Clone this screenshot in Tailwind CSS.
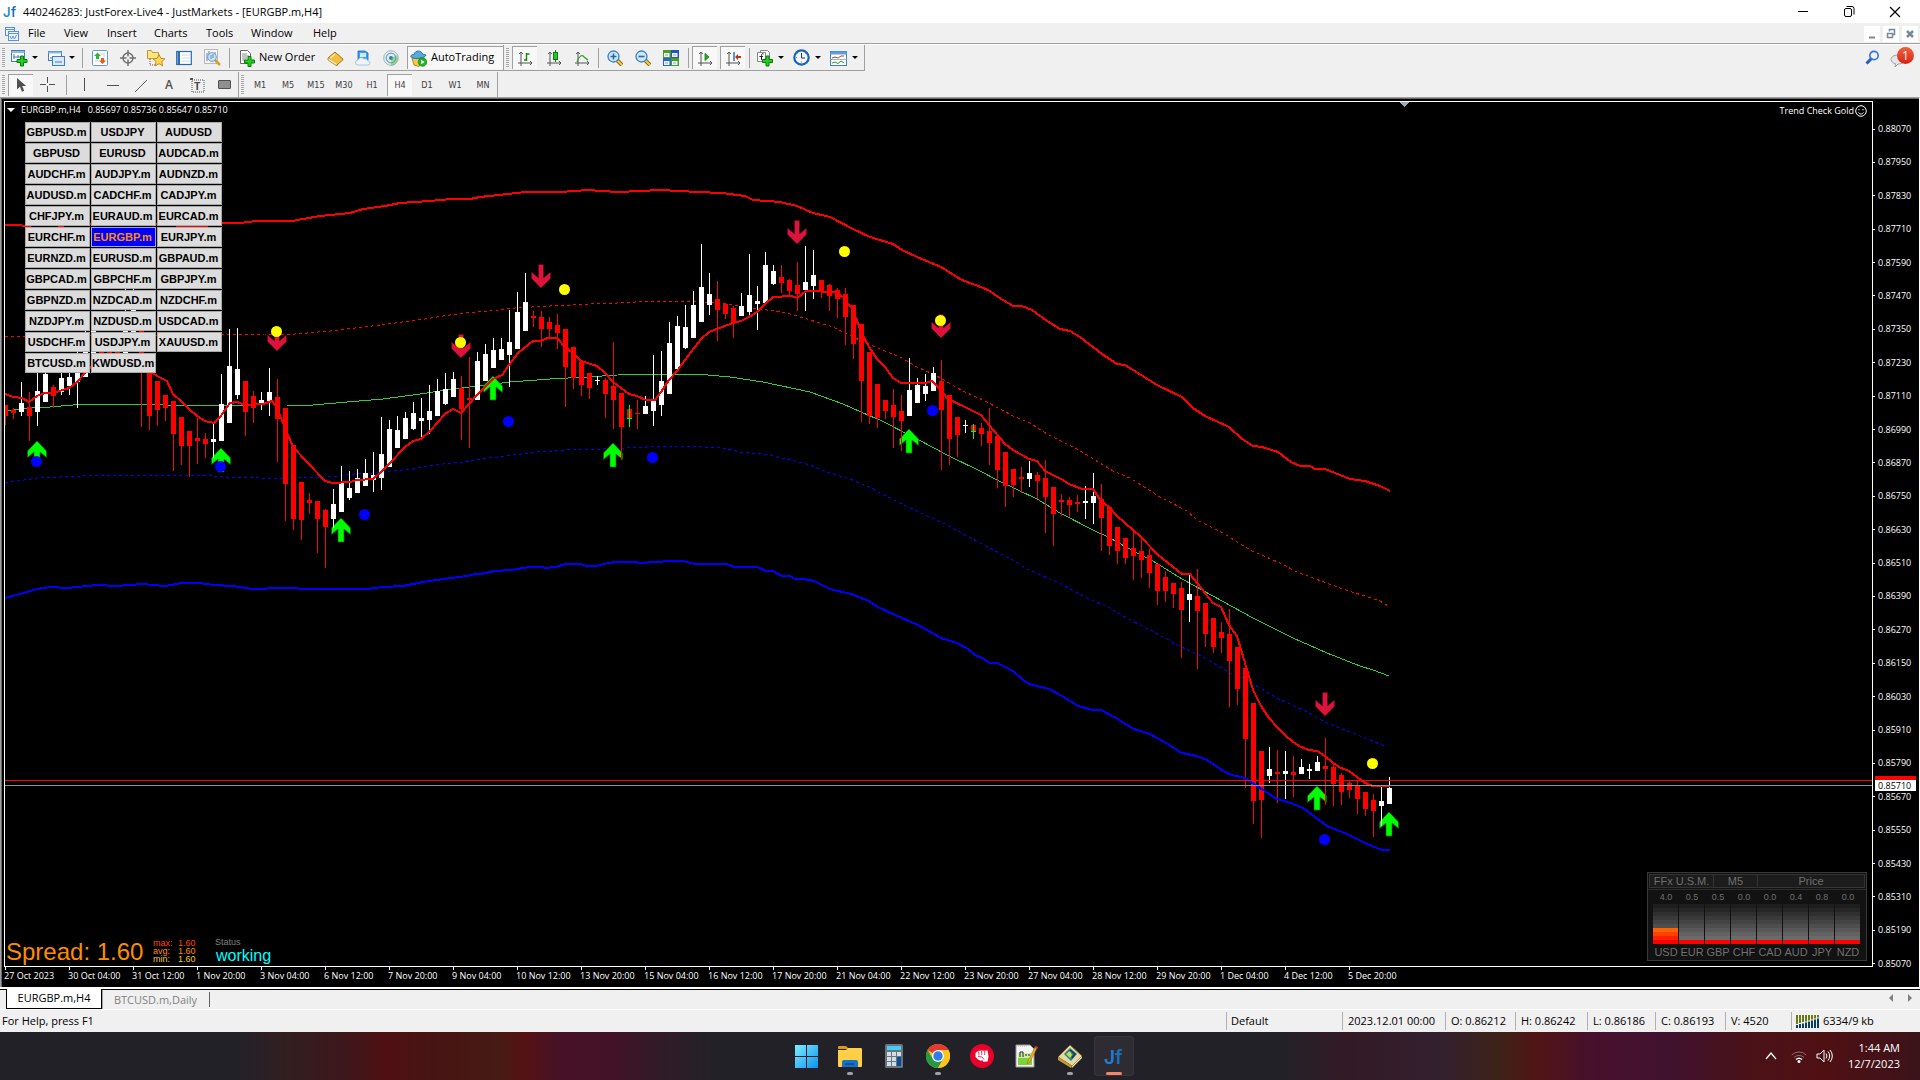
<!DOCTYPE html>
<html lang="en">
<head>
<meta charset="utf-8">
<title>440246283: JustForex-Live4 - JustMarkets - [EURGBP.m,H4]</title>
<script src="https://cdn.jsdelivr.net/npm/@tailwindcss/browser@4"></script>
</head>
<body class="flex h-screen flex-col overflow-hidden bg-[#f0f0f0] font-['Open_Sans','Noto_Sans',sans-serif] text-[11px] leading-4 text-black">

<svg class="hidden" aria-hidden="true">
  <defs>
    <g id="axes"><path d="M4 2v14M1 13h14M2 4l2-2 2 2M13 11l2 2-2 2" fill="none" stroke="#555"/></g>
    <g id="plus"><path d="M3.500 0h3v3.500h3.500v3h-3.500v3.500h-3v-3.500h-3.500v-3h3.500z" fill="#1fd01f" stroke="#087a08"/></g>
    <g id="lens"><path d="M10 10l5 5" stroke="#8a6a10" stroke-width="4"/><path d="M10 10l5 5" stroke="#f2c94a" stroke-width="2"/><circle cx="6.500" cy="6.500" r="5.500" fill="#cfe8fb" stroke="#3b7fc4" stroke-width="1.300"/></g>
    <g id="up"><path d="M0 0L9.500 10v6.500L3 11v13h-6v-13L-9.500 16.500v-6.500z" fill="#0f0" stroke="#060" stroke-width=".6"/></g>
    <g id="down"><path d="M0 0L9.500-9.500v-6.500L2.500-10v-13.500h-5v13.500L-9.500-16v6.500z" fill="#dc143c" stroke="#501" stroke-width=".4"/></g>
  </defs>
</svg>

<header class="flex h-[23px] shrink-0 items-center bg-white pl-[3px] pr-[2px]">
  <svg class="h-4 w-4 overflow-visible" viewBox="0 0 16 16"><text x="0" y="13" font-family="Inter" font-weight="600" font-size="13" fill="#1e88d0">J</text><text x="8" y="13" font-family="Inter" font-weight="600" font-size="13" fill="#1f6fb5">f</text></svg>
  <h1 class="ml-1 flex-1">440246283: JustForex-Live4 - JustMarkets - [EURGBP.m,H4]</h1>
  <button aria-label="Minimize" class="flex w-[46px] justify-center"><svg class="h-5 w-5" viewBox="0 0 20 20" fill="none" stroke="#000"><path d="M5 9.500h10"/></svg></button>
  <button aria-label="Restore" class="flex w-[46px] justify-center"><svg class="h-5 w-5" viewBox="0 0 20 20" fill="none" stroke="#000"><rect x="5.500" y="6.500" width="7" height="8" rx="1.500"/><path d="M7.500 4.500h5.500a2 2 0 0 1 2 2v6"/></svg></button>
  <button aria-label="Close" class="flex w-[46px] justify-center"><svg class="h-5 w-5" viewBox="0 0 20 20" fill="none" stroke="#000" stroke-width="1.200"><path d="M5 5l10 10M15 5L5 15"/></svg></button>
</header>

<nav class="flex h-[22px] shrink-0 items-center border-b border-white pl-[5px] shadow-[inset_0_-1px_0_#a0a0a0]">
  <svg class="mr-[9px] h-[14px] w-[14px]" viewBox="0 0 14 14" fill="#eef5ff" stroke="#5b8fe0"><rect x=".5" y=".5" width="9" height="8"/><path d="M.5 2.500h9"/><rect x="3.500" y="4.500" width="10" height="9"/><path d="M3.500 6.500h10M5 9l1.500 3 1.500-3 1.500 3 2-4" fill="none"/></svg>
  <button class="mb-[2px] w-9 text-left">File</button><button class="mb-[2px] w-[43px] text-left">View</button><button class="mb-[2px] w-[47px] text-left">Insert</button><button class="mb-[2px] w-[52px] text-left">Charts</button><button class="mb-[2px] w-[45px] text-left">Tools</button><button class="mb-[2px] w-[62px] text-left">Window</button><button class="mb-[2px] flex-1 text-left">Help</button>
  <div class="flex gap-[3px] pr-[2px]">
    <button aria-label="Minimize chart" class="h-4 w-4 bg-white"><svg class="h-4 w-4" viewBox="0 0 16 16"><path d="M5 11.500h6" stroke="#778899" stroke-width="2"/></svg></button>
    <button aria-label="Restore chart" class="h-4 w-4 bg-white"><svg class="h-4 w-4" viewBox="0 0 16 16" fill="none" stroke="#778899" stroke-width="1.500"><path d="M4.500 7.500h5v4h-5zM6.500 5.500v-2h5v5h-2"/></svg></button>
    <button aria-label="Close chart" class="h-4 w-4 bg-white"><svg class="h-4 w-4" viewBox="0 0 16 16"><path d="M5 5l6 6M11 5l-6 6" stroke="#778899" stroke-width="2.500"/></svg></button>
  </div>
</nav>

<div class="flex h-[27px] shrink-0 items-start">
  <div class="flex h-[26px] items-center border-b border-r border-[#a0a0a0]">
    <i class="ml-[2px] mr-[1px] h-5 w-[3px] bg-[repeating-linear-gradient(#a8a8a8_0_1px,#f0f0f0_1px_2px)]"></i>
    <button aria-label="New chart" class="flex w-[36px] items-center pl-[4px]"><svg class="h-[18px] w-[18px]" viewBox="0 0 18 18"><rect x="1.500" y="1.500" width="13" height="11" fill="#fff" stroke="#3d7fc0"/><path d="M1.500 3h13" stroke="#8ab8e8" stroke-width="2"/><path d="M4 5v5M8 6v3M3 8h7" stroke="#4a7dae"/><use href="#plus" x="7" y="7"/></svg><i class="ml-1 border-x-[3px] border-t-[3px] border-x-transparent border-t-black"></i></button>
    <button aria-label="Profiles" class="flex w-[37px] items-center pl-[5px]"><svg class="h-[18px] w-[18px]" viewBox="0 0 18 18"><rect x="1.500" y="2.500" width="13" height="9" fill="#fff" stroke="#3d7fc0"/><path d="M1.500 3.500h13" stroke="#8ab8e8" stroke-width="2"/><rect x="5.500" y="7.500" width="12" height="9" fill="#d8ebfc" stroke="#3d7fc0"/><path d="M4 8v2M8 13h7" stroke="#4a7dae"/></svg><i class="ml-1 border-x-[3px] border-t-[3px] border-x-transparent border-t-black"></i></button>
    <i class="mx-[3px] h-5 w-px bg-[#a0a0a0]"></i>
    <button aria-label="Market Watch" class="flex w-7 justify-center"><svg class="h-4 w-4" viewBox="0 0 16 16"><rect x=".5" y=".5" width="15" height="15" rx="1" fill="#fff" stroke="#5c9bd8"/><path d="M9 4h4M3 11h3M11 6h2" stroke="#bcd"/><path d="M5.500 2.500L9 6H7v3H4V6H2z" fill="#2db52d"/><path d="M10.500 14L7 10.500h2V8h3v2.500h2z" fill="#f0551c"/></svg></button>
    <button aria-label="Data Window" class="flex w-7 justify-center"><svg class="h-4 w-4" viewBox="0 0 16 16" fill="none" stroke="#707070" stroke-width="1.500"><circle cx="8" cy="8" r="5"/><path d="M8 0v6.500M8 9.500v6.500M0 8h6.500M9.500 8h6.500"/></svg></button>
    <button aria-label="Navigator" class="flex w-7 justify-center"><svg class="h-[18px] w-[18px]" viewBox="0 0 18 18"><path d="M.5 9.500v-8h4l1 2h6v6z" fill="#ffe680" stroke="#c9962c"/><path d="M3 10v6h5" stroke="#555" stroke-dasharray="1 1" fill="none"/><path d="M12 5.500l1.800 3.800 4 .5-3 2.800.8 4.200-3.600-2.100-3.700 2.100.8-4.200-3-2.800 4.100-.5z" fill="#ffd850" stroke="#c08a20"/></svg></button>
    <button aria-label="Terminal" class="flex w-7 justify-center"><svg class="h-4 w-4" viewBox="0 0 16 16"><rect x=".7" y="1.500" width="14.600" height="13" fill="#fff" stroke="#2a68b0" stroke-width="1.200"/><rect x="1.500" y="2" width="2.500" height="12" fill="#2a6cb8"/><path d="M6 5h8M6 8h8M6 11h8" stroke="#cbdcf2"/></svg></button>
    <button aria-label="Strategy Tester" class="flex w-7 justify-center"><svg class="h-[17px] w-[17px]" viewBox="0 0 17 17"><rect x=".5" y=".5" width="13" height="14" fill="#f5f5f5" stroke="#b9b9b9"/><path d="M3 4v8M5 2v7M11 3v7" stroke="#5588bb"/><path d="M11 11l5 5" stroke="#d8a020" stroke-width="2.500"/><circle cx="8" cy="8" r="4.300" fill="#cfe5f7" stroke="#6a9cca"/><path d="M7 6v4M9 5v4" stroke="#5588bb"/></svg></button>
    <i class="mx-[3px] h-5 w-px bg-[#a0a0a0]"></i>
    <button class="flex w-[88px] items-center gap-1 whitespace-nowrap pl-[6px]"><svg class="h-[18px] w-4" viewBox="0 0 16 18"><path d="M1.500 1.500h7l3 3v10h-10z" fill="#fff" stroke="#666"/><path d="M3 5h5M3 7h7M3 9h5M3 11h4" stroke="#888"/><use href="#plus" x="5.500" y="7.500"/></svg><span class="mb-[2px]">New Order</span></button>
    <button aria-label="MetaEditor" class="flex w-7 justify-center"><svg class="h-4 w-[17px]" viewBox="0 0 17 16"><path d="M1 8L8 2l8 7-6 6z" fill="#f0bf3c" stroke="#a87410"/><path d="M1 8v2l9 6v-2M10 15l6-5V9" fill="#fff5d0" stroke="#a87410" stroke-width=".8"/><path d="M3.500 8L8 4" stroke="#ffe9a8" stroke-width="1.500"/></svg></button>
    <button aria-label="Virtual hosting" class="flex w-7 justify-center"><svg class="h-4 w-4" viewBox="0 0 16 16"><path d="M3 1h7l3 2v7H3z" fill="#3d9ff0" stroke="#1b66b8" stroke-width=".8"/><rect x="5" y="3" width="6" height="4" fill="#cfe9ff"/><path d="M3 15a2.500 2.500 0 0 1 0-5 3.500 3.500 0 0 1 6-1 3 3 0 0 1 4 2 2 2 0 0 1 0 4z" fill="#eef5ff" stroke="#9db5d6" stroke-width=".8"/></svg></button>
    <button aria-label="Signals" class="mr-[2px] flex w-7 justify-center"><svg class="h-4 w-4" viewBox="0 0 16 16" fill="none"><circle cx="8" cy="8" r="7.300" fill="#e4eef2" stroke="#9fb6c2"/><circle cx="8" cy="8" r="4.800" stroke="#6aa7cc" stroke-width="1.200"/><circle cx="8" cy="8" r="2" fill="#2d78b8"/><path d="M8 8v8a7.500 7.500 0 0 0 6-11z" fill="#57b847" fill-opacity=".5"/></svg></button>
    <button class="flex h-[23px] w-[96px] items-center gap-1 whitespace-nowrap border-l border-t border-[#a0a0a0] bg-[#f8f8f8] pl-[2px]"><svg class="h-[17px] w-[17px]" viewBox="0 0 17 17"><path d="M2 8l2 7 5 1.500 5-8z" fill="#f5c84a" stroke="#b98818"/><path d="M.5 6c2-2 3-1 4-2 .5-4 7-4 8 0 1 .6 2 .5 3.500 1-1 4-14 5-15.500 1z" fill="#56a9dc" stroke="#2b78ae"/><circle cx="12.500" cy="12" r="4.300" fill="#1db51d" stroke="#0a7d0a" stroke-width=".6"/><path d="M11.200 9.800v4.400l3.500-2.200z" fill="#fff"/></svg><span class="mb-[2px]">AutoTrading</span></button>
  </div>
  <div class="flex h-[26px] items-center border-b border-r border-[#a0a0a0]">
    <i class="ml-[2px] mr-[3px] h-5 w-[3px] bg-[repeating-linear-gradient(#a8a8a8_0_1px,#f0f0f0_1px_2px)]"></i>
    <button aria-label="Bar chart" class="mr-[3px] flex h-[23px] w-[25px] items-center justify-center border-l border-t border-[#a0a0a0] bg-[#f8f8f8]"><svg class="h-4 w-4" viewBox="0 0 16 16"><use href="#axes"/><path d="M9.500 3v8M9.500 4h3M7 10h3" stroke="#118811" stroke-width="1.400"/></svg></button>
    <button aria-label="Candlesticks" class="flex w-7 justify-center"><svg class="h-4 w-4" viewBox="0 0 16 16"><use href="#axes"/><path d="M9.500 0v12" stroke="#117711"/><rect x="7.500" y="2.500" width="4" height="7" fill="#22cc22" stroke="#0a7a0a"/></svg></button>
    <button aria-label="Line chart" class="flex w-7 justify-center"><svg class="h-4 w-4" viewBox="0 0 16 16"><use href="#axes"/><path d="M3 12c2-6 5-8 7-5l4 3" fill="none" stroke="#2f9a2f" stroke-width="1.200"/></svg></button>
    <i class="mx-[2px] h-5 w-px bg-[#a0a0a0]"></i>
    <button aria-label="Zoom in" class="flex w-7 justify-center"><svg class="h-4 w-4" viewBox="0 0 16 16"><use href="#lens"/><path d="M3.500 6.500h6M6.500 3.500v6" stroke="#2767a8" stroke-width="1.600"/></svg></button>
    <button aria-label="Zoom out" class="flex w-7 justify-center"><svg class="h-4 w-4" viewBox="0 0 16 16"><use href="#lens"/><path d="M3.500 6.500h6" stroke="#2767a8" stroke-width="1.600"/></svg></button>
    <button aria-label="Tile windows" class="flex w-7 justify-center"><svg class="h-4 w-4" viewBox="0 0 16 16"><path d="M0 0h8v8H0z" fill="#4a9e1c"/><path d="M8 0h8v8H8z" fill="#1e55c4"/><path d="M0 8h8v8H0z" fill="#2a63cc"/><path d="M8 8h8v8H8z" fill="#4a9e1c"/><path d="M1 3h5.500v4H1zM9 3h5.500v4H9zM1 11h5.500v4H1zM9 11h5.500v4H9z" fill="#eef4ff"/><path d="M2 5h3M10 5h3M2 13h3M10 13h3" stroke="#8ac"/></svg></button>
    <i class="mx-[3px] h-5 w-px bg-[#a0a0a0]"></i>
    <button aria-label="Auto scroll" class="mr-[3px] flex h-[23px] w-[25px] items-center justify-center border-l border-t border-[#a0a0a0] bg-[#f8f8f8]"><svg class="h-4 w-4" viewBox="0 0 16 16"><use href="#axes"/><path d="M8 3.500v7l4-3.500z" fill="#22b022" stroke="#0c7a0c" stroke-width=".8"/></svg></button>
    <button aria-label="Chart shift" class="mr-[3px] flex h-[23px] w-[25px] items-center justify-center border-l border-t border-[#a0a0a0] bg-[#f8f8f8]"><svg class="h-4 w-4" viewBox="0 0 16 16"><use href="#axes"/><path d="M9 2v9" stroke="#2f74b5" stroke-width="1.500"/><path d="M10 7l3-3v2h3v2h-3v2z" fill="#c5300c"/></svg></button>
    <i class="mx-px h-5 w-px bg-[#a0a0a0]"></i>
    <button aria-label="Indicators" class="flex w-[37px] items-center pl-[5px]"><svg class="h-[18px] w-[18px]" viewBox="0 0 18 18"><path d="M4.500 1.500h7l2 2v9h-9z" fill="#fff" stroke="#888"/><path d="M1.500 3.500h8v9h-8z" fill="#fafafa" stroke="#888"/><path d="M7.500 5c-2-1-2 1-2 2.500V11M3.500 7.500h3.500" fill="none" stroke="#222"/><use href="#plus" x="6.500" y="7"/></svg><i class="ml-1 border-x-[3px] border-t-[3px] border-x-transparent border-t-black"></i></button>
    <button aria-label="Periodicity" class="flex w-[37px] items-center pl-[5px]"><svg class="h-[17px] w-[17px]" viewBox="0 0 17 17"><circle cx="8.500" cy="8.500" r="7.200" fill="#eef6ff" stroke="#1c62b4" stroke-width="2.200"/><path d="M8.500 4v5h3.500" fill="none" stroke="#333"/><path d="M8.500 12.500v1M4 8.500H3M5 5l-.7-.7M12 5l.7-.7" stroke="#68a"/></svg><i class="ml-[5px] border-x-[3px] border-t-[3px] border-x-transparent border-t-black"></i></button>
    <button aria-label="Templates" class="flex w-[39px] items-center pl-[5px]"><svg class="h-4 w-[17px]" viewBox="0 0 17 16"><rect x=".5" y="1.500" width="16" height="14" fill="#fff" stroke="#3d7fc0"/><path d="M.5 3h16" stroke="#5f9fe0" stroke-width="3"/><path d="M2 8l3-1 3 1 3-2h3" fill="none" stroke="#b5481a"/><path d="M.5 9.500h16" stroke="#9bc"/><path d="M2 13l3-1 3 1.500 3-2.500 3 2" fill="none" stroke="#2a9a2a"/></svg><i class="ml-[5px] border-x-[3px] border-t-[3px] border-x-transparent border-t-black"></i></button>
  </div>
  <div class="flex flex-1 items-start justify-end gap-[10px] pr-[6px] pt-[2px]">
    <button aria-label="Search"><svg class="mt-[3px] h-[15px] w-[15px]" viewBox="0 0 15 15" fill="none"><path d="M6.500 8.500L1.500 13.500" stroke="#2459c8" stroke-width="3"/><circle cx="9" cy="5.500" r="4.200" fill="#eef4fc" stroke="#3b74d8" stroke-width="1.700"/></svg></button>
    <button aria-label="Notifications" class="relative h-[21px] w-[24px]"><svg class="absolute left-0 top-[7px] h-[14px] w-4" viewBox="0 0 16 14"><path d="M8 1c4 0 7 2 7 4.500S12 10 8 10l-3 3 .5-3.200C3 9.300 1 7.500 1 5.500 1 3 4 1 8 1z" fill="#e4e6ea" stroke="#9aa0a8"/></svg><span class="absolute right-0 top-0 h-[17px] w-[17px] rounded-full bg-gradient-to-b from-[#f0603c] to-[#d81e10] text-center text-xs leading-[17px] text-white">1</span></button>
  </div>
</div>

<div class="flex h-[25px] shrink-0 items-center font-['DejaVu_Sans_Condensed','DejaVu_Sans',sans-serif] text-[9px] text-[#404040]">
  <div class="flex h-full items-center border-r border-[#a0a0a0]">
    <i class="ml-[2px] mr-[3px] h-5 w-[3px] bg-[repeating-linear-gradient(#a8a8a8_0_1px,#f0f0f0_1px_2px)]"></i>
    <button aria-label="Cursor" class="mr-px flex h-[22px] w-[25px] items-center justify-center border-l border-t border-[#a0a0a0] bg-[#f8f8f8]"><svg class="h-4 w-4" viewBox="0 0 16 16"><path d="M4 1v11.500l3-2.800 2 5 2.200-1-2-4.700h4z" fill="#505050"/></svg></button>
    <button aria-label="Crosshair" class="flex w-7 justify-center"><svg class="h-4 w-4" viewBox="0 0 16 16" stroke="#505050"><path d="M7.500 0v6M7.500 9v6M0 7.500h6M9 7.500h6"/></svg></button>
    <i class="mx-[4px] h-5 w-px bg-[#a0a0a0]"></i>
    <button aria-label="Vertical line" class="flex w-7 justify-center"><svg class="h-4 w-4" viewBox="0 0 16 16" stroke="#505050"><path d="M7.500 1v13"/></svg></button>
    <button aria-label="Horizontal line" class="flex w-7 justify-center"><svg class="h-4 w-4" viewBox="0 0 16 16" stroke="#505050"><path d="M2 8.500h12"/></svg></button>
    <button aria-label="Trendline" class="flex w-7 justify-center"><svg class="h-4 w-4" viewBox="0 0 16 16" stroke="#606060"><path d="M2 15L14 3"/></svg></button>
    <button aria-label="Text" class="w-7 text-center font-['Open_Sans'] text-[12px] font-semibold text-[#505050]">A</button>
    <button aria-label="Text label" class="flex w-7 justify-center"><svg class="h-4 w-4" viewBox="0 0 16 16"><rect x="3" y="3" width="12" height="12" fill="none" stroke="#505050" stroke-dasharray="1 1"/><path d="M1 1h3v2H1z" fill="#505050"/><text x="5" y="13" font-family="Open Sans" font-weight="700" font-size="11" fill="#505050">T</text></svg></button>
    <button aria-label="Shapes" class="flex w-[27px] justify-center"><i class="h-[9px] w-[13px] rounded-[1px] border border-[#505050] bg-[#909090]"></i></button>
  </div>
  <div class="flex h-full items-center border-r border-[#a0a0a0]">
    <i class="mx-[2px] h-5 w-[3px] bg-[repeating-linear-gradient(#a8a8a8_0_1px,#f0f0f0_1px_2px)]"></i>
    <button class="w-7">M1</button><button class="w-7">M5</button><button class="w-7">M15</button><button class="w-7">M30</button><button class="w-7">H1</button>
    <button class="mx-px h-[22px] w-[25px] border-l border-t border-[#a0a0a0] bg-[#f8f8f8]">H4</button>
    <button class="w-7">D1</button><button class="w-7">W1</button><button class="w-7">MN</button>
  </div>
</div>

<main class="flex min-h-0 flex-1 border-l border-r border-t border-l-[#a0a0a0] border-r-white border-t-[#a0a0a0] bg-black font-['Open_Sans',sans-serif] text-[9px] text-white">
  <div class="flex min-w-0 flex-1 border-l border-t border-[#696969] pl-[2px] pt-[2px]">
    <div class="flex min-w-0 flex-1 flex-col">
      <div class="relative min-h-0 flex-1 overflow-hidden border border-white">
        <svg id="plot" class="absolute inset-0 h-full w-full" shape-rendering="crispEdges" role="img" aria-label="EURGBP H4 candlestick chart"></svg>
        <div class="absolute left-[2px] top-0 flex items-center gap-[6px] whitespace-pre leading-[15px]"><i class="border-x-[4px] border-t-[4px] border-x-transparent border-t-white"></i><span>EURGBP.m,H4   0.85697 0.85736 0.85647 0.85710</span></div>
        <div class="absolute right-[5px] top-[1px] flex items-center gap-px leading-[15px]">Trend Check Gold<svg class="h-3 w-3" viewBox="0 0 12 12" fill="none" stroke="#fff"><circle cx="6" cy="6" r="5.300"/><path d="M3.500 7.500c1 2 4 2 5 0M4 4v1.300M8 4v1.300"/></svg></div>
        <div id="symbols" class="absolute left-[20px] top-[20px] grid grid-cols-[65px_65px_65px] gap-px font-['Liberation_Sans',Arial,sans-serif] text-[11px] font-bold text-black"></div>
        <div class="absolute bottom-[2px] left-px flex items-end font-['Liberation_Sans',Arial,sans-serif] leading-none">
          <div class="w-[147px] text-2xl leading-[25px] text-[#ff8c00]">Spread: 1.60</div>
          <dl class="mb-px grid w-[62px] grid-cols-[25px_1fr] leading-[8px]"><dt class="text-[#ff4500]">max:</dt><dd class="text-[#ff4500]">1.60</dd><dt class="text-[#ff8c00]">avg:</dt><dd class="text-[#ff8c00]">1.60</dd><dt class="text-[#f0d000]">min:</dt><dd class="text-[#f0d000]">1.60</dd></dl>
          <div><div class="leading-[9px] text-[#808080]">Status</div><div class="pl-px text-base leading-[17px] text-[#00ffff]">working</div></div>
        </div>
        <section class="absolute bottom-[5px] right-[5px] w-[220px] border border-[#383838] bg-[#121212] font-['Liberation_Sans',Arial,sans-serif] text-[#707070]">
          <div class="m-px grid grid-cols-[64px_44px_1fr] divide-x divide-[#333] border border-[#333] bg-[#1c1c1c] text-center text-[11px] leading-[12px]"><span>FFx U.S.M.</span><span>M5</span><span>Price</span></div>
          <div id="meter" class="grid grid-cols-8 border-t border-[#2c2c2c] px-[5px] text-center"></div>
        </section>
      </div>
      <div id="times" class="flex h-5 overflow-hidden"></div>
    </div>
    <div class="relative w-[46px]">
      <div id="prices" class="flex h-full flex-col justify-between pb-[18px] pt-[23px]"></div>
      <span class="absolute left-[2px] top-[675px] h-[14px] w-[41px] bg-[#f00]"></span>
      <span class="absolute left-[2px] top-[679px] h-[11px] w-[41px] bg-white pl-[3px] leading-[11px] text-black">0.85710</span>
    </div>
  </div>
</main>

<div class="flex h-[22px] shrink-0 border-t-2 border-white">
  <div class="flex flex-1 items-start border-t border-black pl-[6px]">
    <button class="-mt-px h-5 w-24 border border-t-0 border-black bg-white pb-px leading-[18px] shadow-[1px_1px_0_#a0a0a0]">EURGBP.m,H4</button>
    <button class="mt-[2px] h-[15px] w-[108px] border-r border-[#606060] leading-[14px] text-[#808080]">BTCUSD.m,Daily</button>
    <div class="ml-auto mt-1 flex gap-3 pr-[8px] text-[#808080]"><svg class="h-2 w-1" viewBox="0 0 4 8" fill="currentColor"><path d="M4 0v8L0 4z"/></svg><svg class="ml-[3px] h-2 w-1" viewBox="0 0 4 8" fill="currentColor"><path d="M0 0v8l4-4z"/></svg></div>
  </div>
</div>

<footer class="flex h-[23px] shrink-0 items-center whitespace-nowrap border-t border-white *:border-[#b0b0b0] *:leading-[18px]">
  <span class="flex-1 pl-[2px]">For Help, press F1</span>
  <span class="w-[116px] border-l pl-1">Default</span>
  <span class="w-[103px] border-l pl-[5px]">2023.12.01 00:00</span>
  <span class="w-[70px] border-l pl-[5px]">O: 0.86212</span>
  <span class="w-[72px] border-l pl-[5px]">H: 0.86242</span>
  <span class="w-[68px] border-l pl-[5px]">L: 0.86186</span>
  <span class="w-[70px] border-l pl-[5px]">C: 0.86193</span>
  <span class="w-[66px] border-l pl-[5px]">V: 4520</span>
  <span class="flex w-[129px] items-center gap-[3px] border-l pl-[4px]"><svg class="h-[13px] w-6" viewBox="0 0 24 13"><path d="M1 0v9M4 0v8M7 0v7M10 0v6.500M13 0v5.500M16 0v4.500M19 0v3.500M22 0v2.500" stroke="#6b7d10" stroke-width="2"/><path d="M1 10v3M4 9v4M7 8.500v4.500M10 7.500v5.500M13 6.500v6.500M16 5.500v7.500M19 4.500v8.500M22 3.500v9.500" stroke="#0c3c66" stroke-width="2"/></svg>6334/9 kb</span>
</footer>

<div class="relative flex h-12 shrink-0 items-center justify-center bg-[linear-gradient(90deg,#232128_0%,#232128_12.500%,#331e20_15%,#3d171b_18%,#4f1013_20%,#471414_22.500%,#471a14_26%,#551212_27.300%,#471126_29%,#431228_32%,#331a28_34%,#232128_37%,#232128_67%,#331a25_70%,#33202f_75%,#3d2218_78%,#501515_80%,#47102d_83%,#40122e_87%,#4a1218_91%,#4f1013_95%,#3b131a_100%)] text-white">
  <div class="flex items-center gap-1 *:relative *:flex *:h-10 *:w-10 *:items-center *:justify-center *:rounded">
    <button aria-label="Start"><svg class="h-[23px] w-[23px]" viewBox="0 0 23 23"><defs><linearGradient id="win" x2="1" y2="1"><stop stop-color="#7fecff"/><stop offset="1" stop-color="#0a93f0"/></linearGradient></defs><path d="M0 0h11v11H0zM12 0h11v11H12zM0 12h11v11H0zM12 12h11v11H12z" fill="url(#win)"/></svg></button>
    <button aria-label="File Explorer"><svg class="h-6 w-6" viewBox="0 0 24 24"><path d="M0 3a1 1 0 0 1 1-1h7l3 3H0z" fill="#dd9a10"/><path d="M0 6h8l2-2h13a1 1 0 0 1 1 1v17a1 1 0 0 1-1 1H1a1 1 0 0 1-1-1z" fill="#ffcf48"/><path d="M4 23v-5a2 2 0 0 1 2-2h12a2 2 0 0 1 2 2v5z" fill="#1272c6"/><path d="M7 20h9" stroke="#0a4a90" stroke-width="1.500"/></svg><i class="absolute bottom-px h-[3px] w-[6px] rounded bg-[#a0a0a0]"></i></button>
    <button aria-label="Calculator"><svg class="h-6 w-[18px]" viewBox="0 0 18 24"><rect width="18" height="24" rx="1.500" fill="#67757f"/><rect x="2" y="2" width="14" height="4" fill="#46cdf5"/><path d="M2 8h4v4H2zM7 8h4v4H7zM12 8h4v4h-4zM2 13h4v4H2zM7 13h4v4H7zM2 18h4v4H2zM7 18h4v4H7z" fill="#d4dde3"/><path d="M12 13h4v9h-4z" fill="#0b4c94"/></svg></button>
    <button aria-label="Chrome"><svg class="h-6 w-6" viewBox="0 0 24 24"><circle cx="12" cy="12" r="12" fill="#fbc116"/><path d="M12 12L1.600 6A12 12 0 0 1 22.400 6H12z" fill="#e33b2e"/><path d="M1.600 6A12 12 0 0 0 12 24l5.200-9L12 12 6.800 15z" fill="#229a48"/><path d="M12 6h10.400A12 12 0 0 1 12 24l5.200-9z" fill="#fcc41c"/><circle cx="12" cy="12" r="6" fill="#fff"/><circle cx="12" cy="12" r="4.700" fill="#2f7de9"/></svg><i class="absolute bottom-px h-[3px] w-[6px] rounded bg-[#a0a0a0]"></i></button>
    <button aria-label="Riot Client"><svg class="h-6 w-6" viewBox="0 0 24 24"><circle cx="12" cy="12" r="12" fill="#eb0029"/><path d="M5.500 9L8 7l3-.5 3 .3 3.500-.3 1 5.500-.8 5.500-4.700.3-.8-2-1 1.200-3.200-1.500L5.500 13z" fill="#fff"/><path d="M8.500 7.500l.6 4M11.500 7l.3 4M14.700 7v4M8 12.500l4 .5 2 2.500" stroke="#eb0029" stroke-width=".8" fill="none"/></svg></button>
    <button aria-label="Notepad++"><svg class="h-6 w-6" viewBox="0 0 24 24"><path d="M2 1h14l4 4v18H2z" fill="#f4f4f4" stroke="#999"/><path d="M4 13h14v8H4z" fill="#7cd23a"/><path d="M4 9h14v5H4z" fill="#c8ef9c"/><path d="M6 8v5M9 8v5M6 8h3M11 11h2M14 11h2" stroke="#222" fill="none"/><path d="M2 2h12" stroke="#aaa" stroke-dasharray="1 1"/><path d="M21 3L14 17l-1 3 3-2 7-14z" fill="#eaae1c" stroke="#9a6c10" stroke-width=".5"/><path d="M21 2l3 1-1 2-2-1z" fill="#d84030"/></svg></button>
    <button aria-label="MetaTrader"><svg class="h-6 w-6" viewBox="0 0 24 24"><path d="M0 13L12 1l12 11-10 10z" fill="#e4d9a8" stroke="#7d6820"/><path d="M0 13v3l13 8 1-2z" fill="#c79c2c"/><path d="M14 22l10-10v2L14 24z" fill="#fff8d8" stroke="#8d7426" stroke-width=".6"/><path d="M6 10l6-6 7 6-6 7z" fill="#2c7f88"/><path d="M8 10l4-3 2 4-2 3z" fill="#bfe04c"/><path d="M12 6l5 4-3 4" fill="none" stroke="#153c58" stroke-width="1.500"/></svg><i class="absolute bottom-px h-[3px] w-[6px] rounded bg-[#a0a0a0]"></i></button>
    <button aria-label="JustMarkets terminal" class="border border-white/5 bg-white/5"><svg class="h-6 w-6 overflow-visible" viewBox="0 0 24 24"><text x="2" y="20" font-family="Inter" font-weight="600" font-size="19" fill="#1e7fd0">J</text><text x="13" y="20" font-family="Inter" font-weight="600" font-size="19" fill="#1b70bd">f</text></svg><i class="absolute bottom-0 h-[3px] w-4 rounded bg-[#f5866c]"></i></button>
  </div>
  <div class="absolute right-5 top-0 flex h-full items-center gap-[9px]">
    <svg class="h-4 w-4" viewBox="0 0 16 16" fill="none" stroke="#fff" stroke-width="1.300"><path d="M4 11l5-6 5 6"/></svg>
    <svg class="ml-1 h-4 w-4" viewBox="0 0 16 16" fill="none"><path d="M.8 7a10 10 0 0 1 14.400 0M3 9.500a7 7 0 0 1 10 0" stroke="#8a6a6d"/><path d="M5 11.500a4.500 4.500 0 0 1 6 0" stroke="#fff" stroke-width="1.500"/><circle cx="8" cy="13.500" r="1.500" fill="#fff"/></svg>
    <svg class="h-4 w-[18px]" viewBox="0 0 18 16" fill="none" stroke="#fff"><path d="M1 6h3l4-4v12l-4-4H1zM10 5.500a4 4 0 0 1 0 5M12 3.500a7 7 0 0 1 0 9M14 2a9 9 0 0 1 0 12"/></svg>
    <div class="ml-[5px] text-right leading-4">1:44 AM<br>12/7/2023</div>
  </div>
</div>

<script>
const el = id => document.getElementById(id);

el('symbols').innerHTML = ('GBPUSD.m USDJPY AUDUSD GBPUSD EURUSD AUDCAD.m AUDCHF.m AUDJPY.m AUDNZD.m AUDUSD.m CADCHF.m CADJPY.m ' +
 'CHFJPY.m EURAUD.m EURCAD.m EURCHF.m EURGBP.m EURJPY.m EURNZD.m EURUSD.m GBPAUD.m GBPCAD.m GBPCHF.m GBPJPY.m GBPNZD.m NZDCAD.m NZDCHF.m ' +
 'NZDJPY.m NZDUSD.m USDCAD.m USDCHF.m USDJPY.m XAUUSD.m BTCUSD.m KWDUSD.m').split(' ').map(s =>
  s === 'EURGBP.m'
   ? `<button class="h-5 border border-[#a0a0ff] bg-[#0000ff] pr-[2px] leading-[18px] text-[#ff8c00]">${s}</button>`
   : `<button class="h-5 border border-[#a9a9a9] bg-[#dcdcdc] pr-[2px] leading-[18px]">${s}</button>`).join('');

el('times').innerHTML = ['27 Oct 2023','30 Oct 04:00','31 Oct 12:00','1 Nov 20:00','3 Nov 04:00','6 Nov 12:00','7 Nov 20:00','9 Nov 04:00','10 Nov 12:00','13 Nov 20:00','15 Nov 04:00','16 Nov 12:00','17 Nov 20:00','21 Nov 04:00','22 Nov 12:00','23 Nov 20:00','27 Nov 04:00','28 Nov 12:00','29 Nov 20:00','1 Dec 04:00','4 Dec 12:00','5 Dec 20:00']
 .map(t => `<div class="w-16 shrink-0 whitespace-nowrap leading-[12px]"><i class="ml-px block h-[3px] w-px bg-white"></i>${t}</div>`).join('');

el('prices').innerHTML = Array.from({length: 26}, (_, i) =>
  `<div class="flex h-[10px] items-center gap-[3px] leading-[10px]"><i class="h-px w-[2px] bg-white"></i>${(0.8807 - i * 0.0012).toFixed(5)}</div>`).join('');

const shades = ['#1e1e1e','#262626','#303030','#3a3a3a','#444444','#4e4e4e','#585858','#626262','#6a6a6a'];
el('meter').innerHTML = [['USD','4.0'],['EUR','0.5'],['GBP','0.5'],['CHF','0.0'],['CAD','0.0'],['AUD','0.4'],['JPY','0.8'],['NZD','0.0']].map(([n, v]) => {
  const hot = n === 'USD' ? ['#ff6000','#ff4000','#ff2000','#ff0000'] : ['#ff0000'];
  const cells = shades.concat('#707070').slice(0, 10 - hot.length).concat(hot);
  return `<div><div class="leading-[14px]">${v}</div><div class="mr-px flex flex-col">${cells.map(c => `<i class="h-1" style="background:${c}"></i>`).join('')}</div><div class="pb-px pt-[2px] text-[11px] leading-[13px]">${n}</div></div>`;
}).join('');

// One candle every 8px from x=5: colour, wick top, body top, body bottom, wick bottom
const candles = `r405,405,416,425 r408,410,413,419 w382,403,412,416 r392,407,416,441 w365,391,412,426 w365,374,402,402 r385,387,396,408 w370,378,392,395 w370,377,386,395 w345,370,382,408
w325,345,377,377 w320,325,355,355 r345,350,360,373 r345,350,358,360 r345,350,358,360 w285,325,358,358 w280,305,335,335 r320,325,365,427 r360,362,416,430 r381,381,410,426
r395,395,408,421 r401,401,434,471 r417,417,446,465 r431,431,446,477 r418,438,441,464 r433,439,444,458 w423,439,442,458 w374,404,441,441 w329,366,423,423 w328,369,395,399
r381,381,412,436 r391,396,408,423 w392,400,403,410 w368,392,402,416 r379,397,419,462 r408,408,484,521 r445,445,519,530 r482,482,520,540 r493,500,503,514 r501,501,519,553
r509,510,527,568 w489,504,519,528 w466,482,512,512 w471,488,498,500 w469,478,493,493 w459,473,486,486 w452,475,480,492 w417,454,478,490 w420,429,467,467 w416,430,448,448
w412,418,439,439 w402,413,429,430 w398,418,421,440 w385,411,420,434 w379,391,416,416 w373,389,404,405 w372,379,397,397 r376,388,409,440 r357,398,400,448 w352,361,400,400
w344,354,381,381 w338,350,368,368 w338,349,360,360 w310,342,355,387 w292,312,349,349 w273,302,331,331 r311,316,318,327 r311,317,329,347 r317,322,329,337 r314,325,333,349
r329,329,367,407 r347,347,378,389 r362,362,385,396 r373,373,388,399 w376,380,381,385 r378,380,394,418 r342,386,400,429 r393,393,427,460 g405,409,418,427 r400,413,414,429
w396,406,414,414 w355,399,411,426 w351,381,405,416 w322,343,394,394 w316,326,369,370 w305,327,348,349 w291,305,338,338 w244,287,322,322 w273,294,305,315 r281,299,310,341
r304,304,314,319 r306,308,322,338 w293,306,316,316 w254,295,312,317 w286,301,304,330 w252,265,303,303 w265,271,284,285 r265,277,283,293 r279,280,291,297 r262,285,294,311
w246,282,290,311 w250,275,286,299 r280,280,291,298 r284,285,296,311 r288,290,299,318 r288,294,317,345 r305,305,344,359 r324,324,381,422 r352,352,416,424 r384,384,418,428
r400,400,411,419 r389,405,417,448 r395,411,421,451 w358,390,416,416 w378,385,403,403 w374,386,394,401 w367,373,391,391 r360,381,410,470 r395,395,439,465 r417,417,435,457
w420,425,426,433 g424,425,431,439 r423,428,434,446 r408,431,443,465 r436,436,470,488 r452,452,486,507 r469,469,485,497 r467,477,479,493 w461,473,479,487 r472,475,481,499
r460,478,497,533 r487,487,514,546 r494,500,502,516 r497,500,505,517 r495,502,504,512 w486,501,503,519 w473,496,503,524 r484,499,518,551 r507,507,546,555 r527,527,551,564
r538,538,558,564 r530,548,556,580 r537,551,560,578 r549,555,573,588 r564,564,591,605 r571,577,591,602 r583,583,594,608 r582,588,610,658 w574,594,600,622 r569,596,611,669
r603,603,634,647 r618,618,647,653 r622,632,638,653 r609,634,661,707 r647,647,689,705 r668,668,739,788 r703,703,801,824 r751,751,800,838 w747,769,776,783 r750,772,774,803
w751,771,774,799 r756,772,775,797 w759,767,774,774 w764,769,771,779 w756,762,771,771 r738,766,769,805 r763,767,784,806 r773,775,792,805 r781,783,790,798 r781,786,799,814
r792,792,809,816 r794,800,811,837 w785,801,806,826 w777,788,804,804`.split(/\s+/);

const lines = [
 ['#0000ff', 1, '3 3', '5,483 37,478 60,477 100,475 167,475 200,475 227,477 260,478 290,478 327,477 357,474 387,472 417,468 443,464 463,462 497,457 537,452 567,450 603,449 627,448 667,446 687,446 723,448 740,452 763,454 787,459 810,465 827,472 850,479 867,486 882,494 900,503 923,514 947,525 980,543 1013,560 1027,569 1057,582 1087,598 1110,608 1127,618 1165,638 1177,645 1203,657 1220,667 1232,674 1243,678 1277,698 1307,712 1327,723 1347,731 1373,741 1382,745 1388,745'],
 ['#ff0000', 1, '3 3', '5,337 25,336 222,335 265,334 295,334 330,331 380,325 425,319 443,316 465,313 490,311 515,308 550,306 590,304 617,303 653,301 687,301 720,303 740,306 760,309 787,313 807,319 833,327 853,337 873,346 900,357 917,367 933,374 942,379 963,391 987,402 1013,416 1030,423 1047,434 1077,449 1113,471 1130,478 1160,497 1187,511 1197,520 1223,533 1250,550 1280,563 1297,572 1340,588 1380,601 1388,606'],
 ['#32cd32', 1, '', '5,411 30,408 50,407 73,405 90,404 140,404 167,405 253,406 287,406 313,405 347,402 383,399 420,394 440,391 470,387 510,382 537,380 550,379 587,377 633,374 697,374 730,377 763,382 810,392 843,404 870,416 880,420 917,439 949,456 980,471 997,480 1037,499 1060,513 1093,530 1110,538 1137,553 1153,561 1182,579 1213,596 1233,607 1253,618 1293,638 1327,653 1360,666 1373,670 1389,676'],
 ['#ff0000', 2, '', '5,225 20,225 27,227 35,228 57,228 62,226 68,224 170,224 178,226 205,226 222,223 240,223 256,221 292,221 320,216 350,213 363,209 385,206 400,203 430,201 452,199 470,199 480,197 526,192 560,192 588,190 602,191 618,192 661,190 698,192 722,193 745,196 753,200 767,201 780,202 797,206 813,213 830,217 853,229 870,237 893,244 902,250 917,257 941,267 960,279 967,282 981,287 990,291 998,297 1013,306 1022,306 1032,310 1047,321 1060,329 1070,331 1080,337 1102,354 1117,364 1125,365 1157,385 1182,397 1193,408 1205,416 1229,427 1242,439 1253,446 1262,447 1278,452 1291,462 1300,466 1310,466 1315,469 1325,469 1350,479 1365,481 1380,486 1390,491'],
 ['#0000ff', 2, '', '5,598 20,594 37,589 50,587 67,588 97,585 117,586 142,584 165,586 182,583 200,583 213,585 233,586 252,589 283,588 313,589 367,589 383,587 403,586 423,582 443,579 467,576 475,574 480,574 495,571 511,570 530,567 541,567 546,568 555,567 566,564 580,564 587,566 596,566 608,563 617,562 635,562 640,563 654,562 672,561 683,561 695,564 727,564 734,567 757,567 766,571 773,571 782,576 790,576 795,579 804,579 814,581 830,589 851,594 869,601 876,606 895,615 918,625 934,634 941,638 957,643 968,649 975,655 982,658 990,663 997,663 1013,671 1022,679 1029,684 1049,689 1062,696 1078,706 1093,710 1101,710 1116,718 1127,725 1134,729 1150,734 1166,743 1182,753 1197,756 1207,760 1223,771 1232,775 1245,778 1260,788 1277,799 1288,802 1303,808 1327,826 1347,834 1367,844 1382,850 1390,850'],
 ['#ff0000', 2, '', '5,394 13,397 22,398 29,402 37,396 45,393 53,393 69,388 77,382 85,373 93,365 110,355 150,371 157,376 167,381 173,394 182,402 189,409 197,416 205,421 214,423 220,417 230,403 237,402 245,405 263,404 272,401 277,408 283,423 293,447 307,462 325,481 333,483 350,482 357,480 373,479 381,472 389,464 405,447 413,441 421,439 430,431 445,414 453,409 461,413 477,395 493,379 502,375 509,365 518,353 533,341 540,341 548,338 557,338 565,347 573,353 581,361 597,366 605,373 613,382 629,394 637,396 646,400 655,400 661,392 669,380 677,371 685,360 701,339 709,332 725,326 733,323 741,321 749,317 757,312 765,304 773,297 792,296 797,298 806,291 835,292 843,297 853,310 861,332 869,347 877,359 885,367 893,378 901,383 925,383 932,381 938,387 948,399 965,407 981,415 989,425 1005,444 1013,450 1029,459 1037,461 1045,471 1061,479 1069,484 1082,489 1093,489 1101,501 1109,507 1117,516 1133,530 1141,537 1157,554 1173,567 1182,574 1190,574 1205,593 1213,603 1221,607 1229,625 1237,636 1245,663 1253,690 1261,706 1269,718 1277,727 1285,735 1293,742 1301,747 1309,750 1317,751 1325,756 1333,763 1341,768 1349,771 1357,777 1365,783 1373,786 1390,786']
];
const ups = [[37,441],[221,448],[341,518],[493,376],[613,443],[909,429],[1317,786],[1389,812]];
const downs = [[277,351],[461,358],[541,288],[797,244],[941,338],[1325,716]];
const dots = {'#ffff00': [[276,331],[460,342],[564,289],[844,251],[940,320],[1372,763]], '#0000ff': [[36,461],[220,466],[364,514],[508,421],[652,457],[932,410],[1324,839]]};

const line = ([c, w, d, p]) => `<polyline points="${p}" fill="none" stroke="${c}" stroke-width="${w}" stroke-dasharray="${d}"/>`;
let s = '<g transform="translate(-5 -102)">';
s += lines.slice(0, 3).map(line).join('');
s += ups.map(([x, y]) => `<use href="#up" x="${x}" y="${y}" shape-rendering="auto"/>`).join('');
candles.forEach((c, i) => {
  const x = 5 + 8 * i, [a, b, e, f] = c.slice(1).split(',').map(Number);
  const body = c[0] === 'w' ? '#ffffff' : '#ff0000', wick = c[0] === 'g' ? '#00ff00' : body;
  s += `<rect x="${x - 2}" y="${b}" width="5" height="${Math.max(1, e - b)}" fill="${body}"/><rect x="${x}" y="${a}" width="1" height="${f - a}" fill="${wick}"/>`;
  if (c[0] === 'g') s += `<rect x="${x - 2}" y="${e}" width="5" height="1" fill="${wick}"/>`;
});
s += lines.slice(3).map(line).join('');
s += '<rect x="5" y="780" width="2000" height="1" fill="#ff0000"/><rect x="5" y="785" width="2000" height="1" fill="#8c949c"/>';
s += downs.map(([x, y]) => `<use href="#down" x="${x}" y="${y}" shape-rendering="auto"/>`).join('');
for (const c in dots) s += dots[c].map(([x, y]) => `<circle cx="${x + .5}" cy="${y + .5}" r="5.500" fill="${c}" shape-rendering="auto"/>`).join('');
s += '<path d="M1399 102h10l-5 5z" fill="#a0a8b0"/></g>';
el('plot').innerHTML = s;
</script>
</body>
</html>
